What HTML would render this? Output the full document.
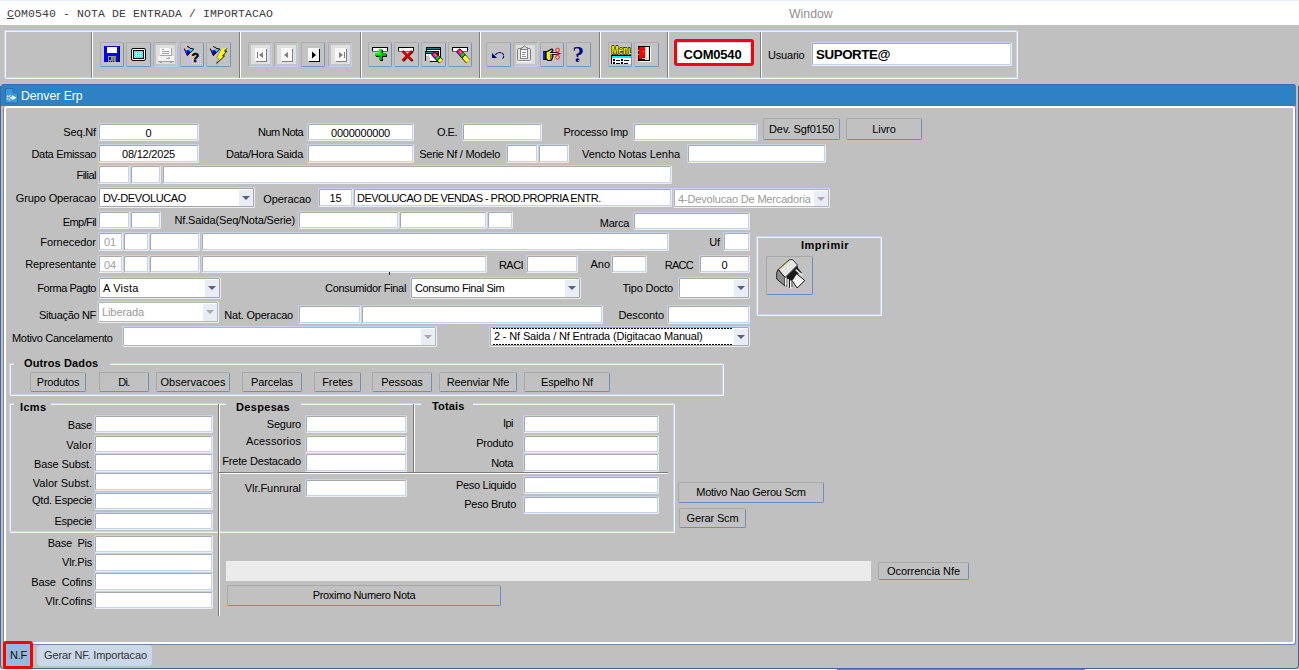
<!DOCTYPE html>
<html><head><meta charset="utf-8"><title>COM0540</title>
<style>
html,body{margin:0;padding:0}
body{width:1299px;height:670px;position:relative;overflow:hidden;background:#c0c0c0;font-family:"Liberation Sans",sans-serif;font-size:11px;color:#000}
div{box-sizing:border-box}
#menubar{position:absolute;left:0;top:0;width:1299px;height:25px;background:#fff;border-top:1px solid #e6f2fa}
#menubar .m{position:absolute;left:7px;top:6px;font-family:"Liberation Mono",monospace;font-size:11.5px;letter-spacing:0.1px;color:#3c3c3c;white-space:pre}
#menubar .m u{text-decoration:underline}
#menubar .w{position:absolute;left:789px;top:6px;font-size:12.3px;color:#909090}
#tbar{left:5px;top:31px;width:1013px;height:48px}
.tb{position:absolute;top:42px;width:24px;height:25px;border:1px solid;border-color:#adadad #7494bc #7494bc #adadad;border-radius:2px;background:#c3c3c3}
.tb.td{border-color:#adadad #bcd2ee #bcd2ee #adadad}
.tb svg{left:-1px !important;top:-1px !important}
.tsep{position:absolute;top:32px;width:2px;height:46px;border-left:1px solid #808080;border-right:1px solid #fff}
#code{position:absolute;left:674px;top:39px;width:80px;height:27px;border:3px solid #fe0000;border-radius:3px;background:#fff;box-shadow:inset 0 1px 0 #c4d4ec,inset -1px 0 0 #d4e0f0;font-weight:bold;font-size:13px;letter-spacing:-0.2px;text-align:center;line-height:24px;padding-right:3px;padding-top:1px}
#usr{position:absolute;left:768px;top:49px;font-size:11px;letter-spacing:-0.2px}
#usrf{position:absolute;left:811px;top:42px;width:201px;height:24px;font-weight:bold;font-size:13.3px;letter-spacing:-0.4px;line-height:23px;padding-left:4px}
#title{position:absolute;left:1px;top:84px;width:1295px;height:22px;background:#2d82c4;border-top:1px solid #3a6ea6;border-radius:3px 3px 0 0;color:#fff;font-size:12px}
#title span{position:absolute;left:20px;top:4px;font-size:12.2px}
#lb{position:absolute;left:0;top:86px;width:1px;height:560px;background:#46639a}
#rb{position:absolute;left:1298px;top:86px;width:1px;height:560px;background:#46639a}
#canvas{position:absolute;left:3px;top:106px;width:1293px;height:539px;border:1px solid #6f86ad;border-top:none;border-radius:4px 3px 3px 3px}
#canvas2{position:absolute;left:4px;top:106px;width:1291px;height:538px;border:2px solid #fff;border-radius:3px}
.f{position:absolute;background:#fff;border:1px solid;border-color:#c4d4ec #ededf1 #ededf1 #c4d4ec;border-radius:2px;box-shadow:inset 1px 1px 0 #a9a9a9,inset -1px -1px 0 #c4d4ec;white-space:nowrap;overflow:hidden;font-size:11px;padding:0 3px;letter-spacing:-0.2px}
.f.dis{color:#a0a0a0;padding-left:5px}
.f.s{padding-left:4px;box-shadow:inset 0 0 0 1px #a6a6a6}
.f.s i{position:absolute;right:1px;top:2px;bottom:1px;width:14px;background:#e9edf5}
.f.s i:after{content:"";position:absolute;left:3px;top:6px;border:4px solid transparent;border-top:4px solid #5c5f7c;border-bottom:none}
.f.s.d{color:#9a9a9a;box-shadow:inset 0 0 0 1px #b4b4b4}
.f.s.d i:after{border-top-color:#a8a8a8}
.f.s.foc:before{content:"";position:absolute;left:3px;right:16px;top:1px;bottom:1px;background:repeating-linear-gradient(90deg,#000 0 2px,transparent 2px 3px) 0 0/100% 1px no-repeat,repeating-linear-gradient(90deg,#000 0 2px,transparent 2px 3px) 0 100%/100% 1px no-repeat}
.l{position:absolute;white-space:nowrap;font-size:11px;line-height:16px;letter-spacing:-0.15px}
.l.r{text-align:right}
.l.bd{font-weight:bold;font-size:11px;letter-spacing:0}
.l.ft{background:#c0c0c0}
.b{position:absolute;text-align:center;white-space:nowrap;font-size:11px;border:1px solid;border-color:#a8a8a8 #6f8fb9 #6f8fb9 #a8a8a8;border-radius:2px;background:#c1c1c1;letter-spacing:0.1px}
.fr{position:absolute;border:1px solid #f1f5fa}
.fr:before{content:"";position:absolute;left:-2px;top:-2px;right:0;bottom:0;border:1px solid #c2d6ef}
.vl{position:absolute;width:2px;border-left:1px solid #7a7a7a;border-right:1px solid #fff}
.hl{position:absolute;height:2px;border-top:1px solid #7a7a7a;border-bottom:1px solid #fff}
#tabs{position:absolute;left:0;top:645px;width:1299px;height:23px}
#nf{position:absolute;left:3px;top:641px;width:30px;height:28px;border:3px solid #fe0000;border-radius:3px;background:#96b9dc;font-size:11px;text-align:center;line-height:22px;color:#111;z-index:5;letter-spacing:-0.3px;padding-left:1px}
#gi{position:absolute;left:37px;top:645px;width:115px;height:21px;background:#cbd8ea;border-radius:4px;font-size:11px;text-align:center;line-height:20px;color:#333;letter-spacing:-0.15px;padding-left:2px}
#bot{position:absolute;left:0;top:669px;width:1299px;height:1px;background:#f1f8fb}
#botl{position:absolute;left:0;top:640px;width:1299px;height:29px;border:1px solid #46639a;border-top:none;border-radius:0 0 4px 4px}
#bot i{position:absolute;left:837px;top:0;width:248px;height:1px;background:#3c96bf}
</style></head><body>
<div id="menubar"><div class="m"><u>C</u>OM0540 - NOTA DE ENTRADA / IMPORTACAO</div><div class="w">Window</div></div>
<div id="tbar" class="fr"></div>
<div class="tb" style="left:100px;width:24px"><svg width="24" height="25" viewBox="0 0 24 25" shape-rendering="crispEdges" style="position:absolute;left:0;top:0"><rect x="4" y="4" width="16" height="16" fill="#0000ff"/><rect x="19" y="5" width="1" height="15" fill="#000"/><rect x="5" y="19" width="15" height="1" fill="#000"/><rect x="7" y="5" width="10" height="6" fill="#fff"/><rect x="8" y="14" width="8" height="6" fill="#9a9a80"/><rect x="12" y="15" width="4" height="4" fill="#808080"/><rect x="9" y="15" width="2" height="3" fill="#0000ff"/><rect x="5" y="7" width="1" height="1" fill="#000"/><path d="M8 4h1M10 4h1M12 4h1M14 4h1M16 4h1M9 19h1M11 19h1M13 19h1" stroke="#000" stroke-width="1" transform="translate(0,.5)"/></svg></div>
<div class="tb" style="left:126px;width:25px"><svg width="24" height="25" viewBox="0 0 24 25" shape-rendering="crispEdges" style="position:absolute;left:0;top:0"><rect x="5.5" y="6.5" width="14" height="12" rx="1.5" fill="#fff" stroke="#000" stroke-width="1" shape-rendering="auto"/><rect x="7.5" y="8.5" width="10" height="8" fill="#b8f4f4" stroke="#000" stroke-width="1"/><path d="M8 9.5h9M8 11.5h9M8 13.5h9M8 15.5h9" stroke="#20e0e0" stroke-width="1" stroke-dasharray="1 1"/><path d="M9 10.5h8M9 12.5h8M9 14.5h8" stroke="#20e0e0" stroke-width="1" stroke-dasharray="1 1"/><path d="M10 11.5h5M10 13.5h5" stroke="#d8d8d8" stroke-width="1"/></svg></div>
<div class="tb td" style="left:153px;width:24px"><svg width="24" height="25" viewBox="0 0 24 25" shape-rendering="crispEdges" style="position:absolute;left:0;top:0"><rect x="3" y="3" width="19" height="19" fill="#dedede"/><rect x="7" y="6" width="12" height="8" fill="#a8a8a8"/><rect x="7" y="6" width="11" height="7" fill="#f8f8f8"/><path d="M9 7.500h2M9 9.500h7M9 11.500h7" stroke="#a0a0a0"/><rect x="5" y="14" width="16" height="5" fill="#f2f2f2"/><rect x="5" y="19" width="16" height="1" fill="#a0a0a0"/><rect x="13" y="16" width="4" height="1" fill="#b0b0b0"/><rect x="15" y="15" width="2" height="1" fill="#c0c0c0"/><rect x="7" y="20" width="2" height="1" fill="#a0a0a0"/><rect x="17" y="20" width="2" height="1" fill="#a0a0a0"/></svg></div>
<div class="tb" style="left:180px;width:24px"><svg width="24" height="25" viewBox="0 0 24 25" shape-rendering="crispEdges" style="position:absolute;left:0;top:0"><g shape-rendering="auto" transform="translate(0,0)"><path d="M8.4 7 L13.6 7.3 L10.4 10.4 L8.8 8.4 Z" fill="#00f0f0"/><path d="M6.2 8.2 L8.8 8 L10.6 10.2 L7.2 13.6 Z" fill="#0000e8"/><path d="M4.3 6.6 L7.3 13.4" stroke="#000" stroke-width="1.1"/><path d="M7.2 13.7 L13.9 7.1" stroke="#000" stroke-width="1"/><path d="M7 4.4 L9.8 5.7 M9.8 6.2 L13.8 7" stroke="#000" stroke-width="1"/><rect x="8" y="4" width="1" height="1" fill="#e00000"/></g><g fill="#ffff00"><rect x="10" y="11" width="1" height="1"/><rect x="12" y="11" width="1" height="1"/><rect x="10" y="13" width="1" height="1"/><rect x="20" y="13" width="1" height="1"/><rect x="10" y="15" width="1" height="1"/><rect x="12" y="15" width="1" height="1"/><rect x="14" y="15" width="1" height="1"/><rect x="18" y="15" width="1" height="1"/><rect x="20" y="15" width="1" height="1"/><rect x="10" y="17" width="1" height="1"/><rect x="12" y="17" width="1" height="1"/><rect x="18" y="17" width="1" height="1"/><rect x="20" y="17" width="1" height="1"/><rect x="12" y="19" width="1" height="1"/><rect x="18" y="19" width="1" height="1"/><rect x="20" y="19" width="1" height="1"/><rect x="12" y="21" width="1" height="1"/><rect x="14" y="21" width="1" height="1"/><rect x="16" y="21" width="1" height="1"/><rect x="18" y="21" width="1" height="1"/><rect x="20" y="21" width="1" height="1"/></g><text x="11.6" y="20.3" font-family="Liberation Sans" font-weight="bold" font-size="12.5" fill="#000" stroke="#000" stroke-width=".5" shape-rendering="auto">?</text></svg></div>
<div class="tb" style="left:206px;width:25px"><svg width="24" height="25" viewBox="0 0 24 25" shape-rendering="crispEdges" style="position:absolute;left:0;top:0"><g shape-rendering="auto" transform="translate(0,0)"><path d="M8.4 7 L13.6 7.3 L10.4 10.4 L8.8 8.4 Z" fill="#00f0f0"/><path d="M6.2 8.2 L8.8 8 L10.6 10.2 L7.2 13.6 Z" fill="#0000e8"/><path d="M4.3 6.6 L7.3 13.4" stroke="#000" stroke-width="1.1"/><path d="M7.2 13.7 L13.9 7.1" stroke="#000" stroke-width="1"/><path d="M7 4.4 L9.8 5.7 M9.8 6.2 L13.8 7" stroke="#000" stroke-width="1"/></g><g shape-rendering="auto"><path d="M15 7.2 L10.6 16 L13.4 16 L10.2 21" fill="none" stroke="#909090" stroke-width="1"/><path d="M16.2 6.5 L20.8 6.5 L18.5 9.2 L20.8 9.2 L16.6 14 L18.5 14 L10.5 21.6 L14 16.2 L11.1 16.2 Z" fill="#ffff00"/><path d="M20.8 6.5 L18.5 9.2 L20.8 9.2 L16.6 14 L18.5 14 L10.5 21.6" fill="none" stroke="#000" stroke-width=".9"/></g></svg></div>
<div class="tb td" style="left:248px;width:24px"><svg width="24" height="25" viewBox="0 0 24 25" shape-rendering="crispEdges" style="position:absolute;left:0;top:0"><rect x="3" y="3" width="19" height="19" fill="#e0e0e0"/><rect x="7" y="6" width="11" height="13" fill="#f8f8f8"/><rect x="8" y="19" width="11" height="1" fill="#808080"/><rect x="18" y="7" width="1" height="13" fill="#808080"/><rect x="9" y="10" width="1" height="6" fill="#808080"/><path d="M15 10 L11 13 L15 16 Z" fill="#808080" shape-rendering="auto"/></svg></div>
<div class="tb td" style="left:274px;width:24px"><svg width="24" height="25" viewBox="0 0 24 25" shape-rendering="crispEdges" style="position:absolute;left:0;top:0"><rect x="3" y="3" width="19" height="19" fill="#e0e0e0"/><rect x="7" y="6" width="11" height="13" fill="#f8f8f8"/><rect x="8" y="19" width="11" height="1" fill="#808080"/><rect x="18" y="7" width="1" height="13" fill="#808080"/><path d="M14 10 L10 13 L14 16 Z" fill="#808080" shape-rendering="auto"/></svg></div>
<div class="tb" style="left:301px;width:24px"><svg width="24" height="25" viewBox="0 0 24 25" shape-rendering="crispEdges" style="position:absolute;left:0;top:0"><rect x="7" y="6" width="11" height="13" fill="#f8f8f8"/><rect x="8" y="19" width="11" height="1" fill="#000"/><rect x="18" y="7" width="1" height="13" fill="#000"/><path d="M11 9.5 L15 13 L11 16.5 Z" fill="#000" shape-rendering="auto"/></svg></div>
<div class="tb td" style="left:328px;width:24px"><svg width="24" height="25" viewBox="0 0 24 25" shape-rendering="crispEdges" style="position:absolute;left:0;top:0"><rect x="3" y="3" width="19" height="19" fill="#e0e0e0"/><rect x="7" y="6" width="11" height="13" fill="#f8f8f8"/><rect x="8" y="19" width="11" height="1" fill="#808080"/><rect x="18" y="7" width="1" height="13" fill="#808080"/><path d="M11 10 L15 13 L11 16 Z" fill="#808080" shape-rendering="auto"/><rect x="16" y="10" width="1" height="6" fill="#808080"/></svg></div>
<div class="tb" style="left:368px;width:24px"><svg width="24" height="25" viewBox="0 0 24 25" shape-rendering="crispEdges" style="position:absolute;left:0;top:0"><rect x="4" y="5" width="16" height="5" fill="#fff"/><rect x="4" y="5" width="16" height="1" fill="#000"/><rect x="4" y="5" width="1" height="4" fill="#000"/><rect x="19" y="5" width="1" height="4" fill="#000"/><rect x="4" y="9" width="16" height="1" fill="#707070"/><path d="M12 8h3v4h4v3h-4v4h-3v-4h-4v-3h4z" fill="#000"/><path d="M11 7h3v4h4v3h-4v4h-3v-4h-4v-3h4z" fill="#00b800"/><path d="M11 7h2v4h-2zM7 11h6v2h-6z" fill="#00ff00"/></svg></div>
<div class="tb" style="left:394px;width:25px"><svg width="24" height="25" viewBox="0 0 24 25" shape-rendering="crispEdges" style="position:absolute;left:0;top:0"><rect x="4" y="5" width="16" height="5" fill="#fff"/><rect x="4" y="5" width="16" height="1" fill="#000"/><rect x="4" y="5" width="1" height="4" fill="#000"/><rect x="19" y="5" width="1" height="4" fill="#000"/><rect x="4" y="9" width="16" height="1" fill="#707070"/><g shape-rendering="auto"><path d="M9 9.5 L18.5 19 M18.5 9.5 L9 19" stroke="#000" stroke-width="2.4"/><path d="M8.5 8.8 L18 18.2 M18 8.8 L8.5 18.2" stroke="#e80000" stroke-width="2.3"/></g></svg></div>
<div class="tb" style="left:421px;width:25px"><svg width="24" height="25" viewBox="0 0 24 25" shape-rendering="crispEdges" style="position:absolute;left:0;top:0"><rect x="5.5" y="5.5" width="14" height="12" fill="#fff" stroke="#000"/><rect x="6" y="6" width="13" height="1" fill="#008888"/><rect x="6" y="7" width="13" height="1" fill="#000"/><rect x="4.5" y="9.5" width="13" height="10" fill="#fff" stroke="#000"/><rect x="5" y="10" width="12" height="1" fill="#00a0a0"/><rect x="5" y="11" width="12" height="1" fill="#000"/><path d="M5 19 L5 14 L8 13 L10 19 Z" fill="#c8c8c8"/><rect x="4" y="19" width="5" height="2" fill="#c0c0c0"/><g shape-rendering="auto" transform="translate(12.2,11.3) rotate(46.4)"><rect x="-.5" y="-2.7" width="12.0" height="5.4" fill="#000" rx="1"/><rect x="0" y="-2.2" width="5" height="4.2" fill="#ff00ff" rx="1.3"/><rect x="0" y="-2.2" width="5" height="1.8" fill="#f00000" rx="1"/><rect x="1.5" y="-1.1" width="2.5" height="1" fill="#ffd000"/><rect x="5" y="-2.2" width="2.7" height="4.2" fill="#00d800"/><rect x="8.5" y="-2.2" width="2.8" height="4.2" fill="#ffff00"/><rect x="8.5" y="-1.2" width="2.8" height="1" fill="#ffffb0"/></g></svg></div>
<div class="tb" style="left:448px;width:24px"><svg width="24" height="25" viewBox="0 0 24 25" shape-rendering="crispEdges" style="position:absolute;left:0;top:0"><rect x="4" y="5" width="16" height="5" fill="#fff"/><rect x="4" y="5" width="16" height="1" fill="#000"/><rect x="4" y="5" width="1" height="4" fill="#000"/><rect x="19" y="5" width="1" height="4" fill="#000"/><rect x="4" y="9" width="16" height="1" fill="#707070"/><g shape-rendering="auto" transform="translate(10.3,8.3) rotate(48.6)"><rect x="-.5" y="-2.7" width="15.4" height="5.4" fill="#000" rx="1"/><rect x="0" y="-2.2" width="5" height="4.2" fill="#ff00ff" rx="1.3"/><rect x="0" y="-2.2" width="5" height="1.8" fill="#f00000" rx="1"/><rect x="1.5" y="-1.1" width="2.5" height="1" fill="#ffd000"/><rect x="5" y="-2.2" width="2.7" height="4.2" fill="#00d800"/><rect x="8.5" y="-2.2" width="6.2" height="4.2" fill="#ffff00"/><rect x="8.5" y="-1.2" width="6.2" height="1" fill="#ffffb0"/></g></svg></div>
<div class="tb" style="left:486px;width:25px"><svg width="25" height="25" viewBox="0 0 25 25" shape-rendering="crispEdges" style="position:absolute;left:0;top:0"><g shape-rendering="auto"><path d="M9.5 13 C10.5 10.3 16.8 9 17.7 13.5 C17.9 15 17.3 16 16.5 16.8" fill="none" stroke="#000080" stroke-width="1.1" stroke-dasharray="3 .6"/><path d="M6 11 L6 16 L11 16 Z" fill="#000080"/></g></svg></div>
<div class="tb td" style="left:513px;width:25px"><svg width="25" height="25" viewBox="0 0 25 25" shape-rendering="crispEdges" style="position:absolute;left:0;top:0"><rect x="3" y="3" width="19" height="19" fill="#dedede"/><rect x="5" y="19" width="13" height="1" fill="#fff"/><g fill="none" stroke="#808080" stroke-width="1"><rect x="4.5" y="6.5" width="13" height="12" fill="#e6e6e6" shape-rendering="auto" rx="1"/><path d="M8.5 7.5 v-2 h1.5 l1 -1.5 h1 l1 1.5 h1.5 v2" fill="#dcdcdc" shape-rendering="auto"/><rect x="7.5" y="7.5" width="7" height="9" fill="#fff"/><path d="M9 10.500h4M9 12.500h3M9 14.500h4" stroke="#909090"/></g></svg></div>
<div class="tb" style="left:540px;width:24px"><svg width="24" height="25" viewBox="0 0 24 25" shape-rendering="crispEdges" style="position:absolute;left:0;top:0"><rect x="3" y="9" width="3" height="9" fill="#000"/><rect x="3" y="10" width="2" height="7" fill="#0020ff"/><g shape-rendering="auto"><path d="M6 10 L9 8.5 L12 7 L13 8.5 L11 10.5 L17 10.5 L18 11.5 L17 12.5 L12.5 12.5 L13 14 L12.5 15.5 L12 17 L11 18.5 L8 18.5 L6 17 Z" fill="#e8e020" stroke="#000" stroke-width="1.1"/><path d="M7 11.500h5M7 13.500h5M7 15.500h5M8 17.500h3" stroke="#fff8a0" stroke-width="1" stroke-dasharray="1 1"/><path d="M10 13h3M10 15h2.500M10 17h2" stroke="#000" stroke-width=".9"/><circle cx="17.6" cy="8" r="1.9" fill="none" stroke="#ff1010" stroke-width=".9"/><circle cx="17.6" cy="15.3" r="1.9" fill="none" stroke="#ff1010" stroke-width=".9"/><path d="M16.6 10 L18.8 13.3 M18.6 10 L16.4 13.3" stroke="#ff1010" stroke-width="1"/><path d="M18.5 11.600h2" stroke="#000" stroke-width="1"/></g></svg></div>
<div class="tb" style="left:566px;width:25px"><svg width="25" height="25" viewBox="0 0 25 25" shape-rendering="crispEdges" style="position:absolute;left:0;top:0"><text x="6.6" y="19.8" font-family="Liberation Serif" font-weight="bold" font-size="23" fill="#000080" shape-rendering="auto">?</text><rect x="9" y="7" width="1" height="1" fill="#fff"/><rect x="12" y="18" width="1" height="1" fill="#fff"/></svg></div>
<div class="tb" style="left:608px;width:24px"><svg width="23" height="24" viewBox="0 0 23 24" shape-rendering="crispEdges" style="position:absolute;left:0;top:0"><g shape-rendering="auto"><text x="3.6" y="11.8" font-family="Liberation Sans" font-weight="bold" font-size="10" textLength="21.5" lengthAdjust="spacingAndGlyphs" fill="#ffff00" stroke="#000" stroke-width="1.3" paint-order="stroke" stroke-linejoin="round">Menu</text></g><rect x="3" y="13" width="20" height="1" fill="#000"/><rect x="4" y="14" width="19" height="2" fill="#00f0f0"/><rect x="3" y="13" width="1" height="9" fill="#000"/><rect x="4" y="16" width="19" height="6" fill="#fff"/><rect x="4" y="15.6" width="19" height=".6" fill="#444"/><rect x="5" y="17" width="2" height="2" fill="#000"/><rect x="5" y="20" width="2" height="2" fill="#000"/><rect x="13" y="17" width="2" height="2" fill="#000"/><rect x="13" y="20" width="2" height="2" fill="#000"/><rect x="8" y="18" width="4" height="1" fill="#000"/><rect x="8" y="21" width="4" height="1" fill="#000"/><rect x="16" y="18" width="5" height="1" fill="#000"/><rect x="16" y="21" width="4" height="1" fill="#000"/></svg></div>
<div class="tb" style="left:634px;width:25px"><svg width="25" height="25" viewBox="0 0 25 25" shape-rendering="crispEdges" style="position:absolute;left:0;top:0"><rect x="5" y="5" width="12" height="15" fill="#fff"/><rect x="4" y="4" width="12" height="15" fill="#000"/><rect x="11" y="5" width="4" height="13" fill="#e0e0e0"/><rect x="13" y="6" width="1" height="11" fill="#fff"/><rect x="8" y="16" width="6" height="1" fill="#d0d0d0"/><path d="M5 5 L11 5 L11 15.5 L9 15.5 L7 17 L5 17 Z" fill="#ff0000" shape-rendering="auto"/><rect x="4" y="8" width="1" height="1" fill="#f0f000"/><rect x="4" y="12" width="1" height="1" fill="#f0f000"/><rect x="9" y="9" width="1" height="1" fill="#f0f000"/></svg></div>
<div class="tsep" style="left:91px"></div>
<div class="tsep" style="left:239px"></div>
<div class="tsep" style="left:360px"></div>
<div class="tsep" style="left:479px"></div>
<div class="tsep" style="left:599px"></div>
<div class="tsep" style="left:667px"></div>
<div class="tsep" style="left:760px"></div>
<div id="code">COM0540</div>
<div id="usr">Usuario</div>
<div id="usrf" class="f">SUPORTE@</div>
<div id="lb"></div><div id="rb"></div>
<div id="title"><svg width="14" height="16" viewBox="0 0 14 16" style="position:absolute;left:4px;top:3px"><path d="M.5 .5h7.500l4.5 4.500v10h-12.500z" fill="#3f98d8" stroke="#2a6fae"/><path d="M8 .5v4.500h4.5" stroke="#2a6fae" fill="#3285c8"/><path d="M7.3 7.300l4.2 2.4-4.2 2.400z" fill="#fff"/><circle cx="4.3" cy="9.7" r="1.9" fill="none" stroke="#fff" stroke-width="1.7" stroke-dasharray="1.1 .9"/></svg><span>Denver Erp</span></div>
<div id="canvas"></div><div id="canvas2"></div>
<div class="l r " style="left:-204px;width:300px;top:124px;letter-spacing:-0.15px;">Seq.Nf</div>
<div class="f " style="left:98px;top:123px;width:101px;height:18px;line-height:18px;text-align:center;">0</div>
<div class="l r " style="left:3px;width:300px;top:124px;letter-spacing:-0.57px;">Num Nota</div>
<div class="f " style="left:307px;top:123px;width:107px;height:18px;line-height:18px;text-align:center;letter-spacing:-0.22px;">0000000000</div>
<div class="l r " style="left:157px;width:300px;top:124px;letter-spacing:-0.50px;">O.E.</div>
<div class="f " style="left:462px;top:123px;width:80px;height:18px;line-height:18px;"></div>
<div class="l r " style="left:328px;width:300px;top:124px;letter-spacing:-0.23px;">Processo Imp</div>
<div class="f " style="left:633px;top:123px;width:125px;height:18px;line-height:18px;"></div>
<div class="b " style="left:763px;top:118px;width:77px;height:22px;line-height:20px;letter-spacing:-0.07px;">Dev. Sgf0150</div>
<div class="b " style="left:846px;top:118px;width:76px;height:22px;line-height:20px;letter-spacing:-0.09px;">Livro</div>
<div class="l r " style="left:-204px;width:300px;top:146px;letter-spacing:-0.33px;">Data Emissao</div>
<div class="f " style="left:98px;top:144px;width:101px;height:19px;line-height:19px;text-align:center;letter-spacing:-0.20px;">08/12/2025</div>
<div class="l r " style="left:3px;width:300px;top:146px;letter-spacing:-0.29px;">Data/Hora Saida</div>
<div class="f " style="left:307px;top:144px;width:107px;height:19px;line-height:19px;"></div>
<div class="l r " style="left:200px;width:300px;top:146px;letter-spacing:-0.25px;">Serie Nf / Modelo</div>
<div class="f " style="left:506px;top:144px;width:32px;height:19px;line-height:19px;"></div>
<div class="f " style="left:538px;top:144px;width:31px;height:19px;line-height:19px;"></div>
<div class="l r " style="left:380px;width:300px;top:146px;letter-spacing:-0.06px;">Vencto Notas Lenha</div>
<div class="f " style="left:687px;top:144px;width:139px;height:19px;line-height:19px;"></div>
<div class="l r " style="left:-204px;width:300px;top:167px;letter-spacing:-0.52px;">Filial</div>
<div class="f " style="left:98px;top:165px;width:32px;height:19px;line-height:19px;"></div>
<div class="f " style="left:130px;top:165px;width:31px;height:19px;line-height:19px;"></div>
<div class="f " style="left:162px;top:165px;width:510px;height:19px;line-height:19px;"></div>
<div class="l r " style="left:-204px;width:300px;top:190px;letter-spacing:-0.12px;">Grupo Operacao</div>
<div class="f s " style="left:98px;top:187px;width:157px;height:21px;line-height:21px;letter-spacing:-0.37px;">DV-DEVOLUCAO<i></i></div>
<div class="l r " style="left:11px;width:300px;top:191px;letter-spacing:-0.07px;">Operacao</div>
<div class="f " style="left:318px;top:188px;width:35px;height:19px;line-height:19px;text-align:center;">15</div>
<div class="f " style="left:353px;top:188px;width:319px;height:19px;line-height:19px;letter-spacing:-0.54px;">DEVOLUCAO DE VENDAS - PROD.PROPRIA ENTR.</div>
<div class="f s d" style="left:673px;top:188px;width:157px;height:20px;line-height:20px;letter-spacing:-0.17px;">4-Devolucao De Mercadoria<i></i></div>
<div class="l r " style="left:-204px;width:300px;top:214px;letter-spacing:-0.58px;">Emp/Fil</div>
<div class="f " style="left:98px;top:211px;width:32px;height:18px;line-height:18px;"></div>
<div class="f " style="left:130px;top:211px;width:31px;height:18px;line-height:18px;"></div>
<div class="l r " style="left:-5px;width:300px;top:212px;letter-spacing:-0.15px;">Nf.Saida(Seq/Nota/Serie)</div>
<div class="f " style="left:298px;top:211px;width:101px;height:18px;line-height:18px;"></div>
<div class="f " style="left:399px;top:211px;width:88px;height:18px;line-height:18px;"></div>
<div class="f " style="left:487px;top:211px;width:26px;height:18px;line-height:18px;"></div>
<div class="l r " style="left:329px;width:300px;top:215px;letter-spacing:-0.26px;">Marca</div>
<div class="f " style="left:633px;top:212px;width:117px;height:18px;line-height:18px;"></div>
<div class="l r " style="left:-204px;width:300px;top:234px;letter-spacing:-0.05px;">Fornecedor</div>
<div class="f dis" style="left:98px;top:232px;width:25px;height:19px;line-height:19px;">01</div>
<div class="f " style="left:123px;top:232px;width:26px;height:19px;line-height:19px;"></div>
<div class="f " style="left:149px;top:232px;width:51px;height:19px;line-height:19px;"></div>
<div class="f " style="left:201px;top:232px;width:468px;height:19px;line-height:19px;"></div>
<div class="l r " style="left:420px;width:300px;top:234px;">Uf</div>
<div class="f " style="left:723px;top:232px;width:27px;height:19px;line-height:19px;"></div>
<div class="l r " style="left:-204px;width:300px;top:256px;letter-spacing:-0.11px;">Representante</div>
<div class="f dis" style="left:98px;top:255px;width:25px;height:18px;line-height:18px;">04</div>
<div class="f " style="left:123px;top:255px;width:26px;height:18px;line-height:18px;"></div>
<div class="f " style="left:149px;top:255px;width:51px;height:18px;line-height:18px;"></div>
<div class="f " style="left:201px;top:255px;width:286px;height:18px;line-height:18px;"></div>
<div class="l r " style="left:223px;width:300px;top:257px;letter-spacing:-0.57px;">RACI</div>
<div class="f " style="left:526px;top:255px;width:52px;height:18px;line-height:18px;"></div>
<div class="l r " style="left:310px;width:300px;top:256px;letter-spacing:-0.03px;">Ano</div>
<div class="f " style="left:611px;top:255px;width:36px;height:18px;line-height:18px;"></div>
<div class="l r " style="left:393px;width:300px;top:257px;letter-spacing:-0.73px;">RACC</div>
<div class="f " style="left:699px;top:255px;width:51px;height:18px;line-height:18px;text-align:center;">0</div>
<div class="l r " style="left:-204px;width:300px;top:280px;letter-spacing:-0.44px;">Forma Pagto</div>
<div class="f s " style="left:98px;top:277px;width:123px;height:22px;line-height:20px;letter-spacing:0.21px;">A Vista<i></i></div>
<div class="l r " style="left:106px;width:300px;top:280px;letter-spacing:-0.33px;">Consumidor Final</div>
<div class="f s " style="left:410px;top:277px;width:171px;height:22px;line-height:20px;letter-spacing:-0.40px;">Consumo Final Sim<i></i></div>
<div class="l r " style="left:373px;width:300px;top:280px;letter-spacing:-0.23px;">Tipo Docto</div>
<div class="f s " style="left:678px;top:277px;width:72px;height:22px;line-height:20px;"><i></i></div>
<div class="l r " style="left:-204px;width:300px;top:307px;letter-spacing:-0.32px;">Situação NF</div>
<div class="f s d" style="left:97px;top:301px;width:122px;height:22px;line-height:20px;letter-spacing:-0.10px;">Liberada<i></i></div>
<div class="l r " style="left:-7px;width:300px;top:307px;letter-spacing:-0.22px;">Nat. Operacao</div>
<div class="f " style="left:298px;top:305px;width:63px;height:19px;line-height:19px;"></div>
<div class="f " style="left:361px;top:305px;width:242px;height:19px;line-height:19px;"></div>
<div class="l r " style="left:364px;width:300px;top:307px;letter-spacing:-0.12px;">Desconto</div>
<div class="f " style="left:667px;top:305px;width:83px;height:19px;line-height:19px;"></div>
<div class="l " style="left:12px;top:330px;letter-spacing:-0.31px;">Motivo Cancelamento</div>
<div class="f s d" style="left:122px;top:326px;width:315px;height:21px;line-height:19px;"><i></i></div>
<div class="f s foc" style="left:489px;top:326px;width:261px;height:21px;line-height:19px;letter-spacing:-0.15px;">2 - Nf Saida / Nf Entrada (Digitacao Manual)<i></i></div>
<div style="position:absolute;left:389px;top:272px;width:1px;height:3px;background:#222"></div>
<div class="fr" style="left:757px;top:237px;width:125px;height:79px"></div>
<div class="l bd" style="left:801px;top:237px;letter-spacing:0.50px;">Imprimir</div>
<div class="b" style="left:766px;top:256px;width:47px;height:39px"><svg width="47" height="39" viewBox="0 0 47 39" style="position:absolute;left:0px;top:0px"><path d="M18.5 20.5 L30.5 8.5 L31 11 L35 16 L29.5 17 L25 23.5 L25.5 29.5 L23 31 L18.5 29 Z" fill="#1a1a1a"/><path d="M11.2 12.5 L22 3 L25.5 2.6 L30.5 8 L18 20.5 Z" fill="#ececec" stroke="#000" stroke-width=".8"/><path d="M13 13.5 L23.5 4.5 M15 15.5 L25.5 5.5 M17 17.5 L27.5 7" stroke="#bdbdbd" stroke-width="1" stroke-dasharray="1 1"/><path d="M12 12.3 L22 3.7" stroke="#a09000" stroke-width="1"/><path d="M9.7 15.5 L11.2 12.5 L18 20.5 L18 29 L9.7 22 Z" fill="#8c8c8c" stroke="#000" stroke-width=".8"/><path d="M18 21 L19.6 20 L19.6 28.5 L18 29 Z" fill="#fff"/><path d="M28.7 12.7 L35.4 18.3" stroke="#e8e8e8" stroke-width="1.6"/><path d="M29.5 16.8 L37.7 23.5 L30.2 31 L25 23.5 Z" fill="#fff" stroke="#000" stroke-width=".9"/><path d="M28 21.5 L33 25.5 M27 24 L31.5 27.7 M29.5 19.5 L35 24" stroke="#c4c4c4" stroke-width="1" stroke-dasharray="1.5 1"/><rect x="20.3" y="22" width="1.5" height="8.5" fill="#fff"/><rect x="23" y="23.5" width="1.5" height="8" fill="#fff"/></svg></div>
<div class="fr" style="left:10px;top:364px;width:714px;height:32px"></div>
<div class="l bd ft" style="left:14px;top:355px;padding:0 12px 0 10px;letter-spacing:0.13px;">Outros Dados</div>
<div class="b " style="left:30px;top:372px;width:56px;height:20px;line-height:18px;letter-spacing:-0.19px;">Produtos</div>
<div class="b " style="left:99px;top:372px;width:50px;height:20px;line-height:18px;letter-spacing:-0.57px;">Di.</div>
<div class="b " style="left:156px;top:372px;width:74px;height:20px;line-height:18px;letter-spacing:0.02px;">Observacoes</div>
<div class="b " style="left:242px;top:372px;width:60px;height:20px;line-height:18px;letter-spacing:-0.13px;">Parcelas</div>
<div class="b " style="left:314px;top:372px;width:47px;height:20px;line-height:18px;letter-spacing:-0.11px;">Fretes</div>
<div class="b " style="left:372px;top:372px;width:60px;height:20px;line-height:18px;letter-spacing:-0.10px;">Pessoas</div>
<div class="b " style="left:439px;top:372px;width:78px;height:20px;line-height:18px;letter-spacing:-0.14px;">Reenviar Nfe</div>
<div class="b " style="left:524px;top:372px;width:86px;height:20px;line-height:18px;letter-spacing:-0.18px;">Espelho Nf</div>
<div class="fr" style="left:10px;top:404px;width:665px;height:129px"></div>
<div class="l bd ft" style="left:14px;top:399px;padding:0 5px 0 6px;letter-spacing:0.33px;">Icms</div>
<div class="l bd ft" style="left:226px;top:399px;padding:0 11px 0 10px;letter-spacing:0.33px;">Despesas</div>
<div class="l bd ft" style="left:421px;top:398px;padding:0 9px 0 11px;letter-spacing:0.15px;">Totais</div>
<div class="vl" style="left:218px;top:404px;height:212px"></div>
<div class="vl" style="left:413px;top:404px;height:68px"></div>
<div class="hl" style="left:219px;top:472px;width:449px"></div>
<div class="l r " style="left:-208px;width:300px;top:417px;letter-spacing:-0.21px;">Base</div>
<div class="f " style="left:94px;top:415px;width:119px;height:18px;line-height:18px;"></div>
<div class="l r " style="left:-208px;width:300px;top:437px;letter-spacing:0.17px;">Valor</div>
<div class="f " style="left:94px;top:435px;width:119px;height:18px;line-height:18px;"></div>
<div class="l r " style="left:-208px;width:300px;top:456px;letter-spacing:-0.12px;">Base Subst.</div>
<div class="f " style="left:94px;top:453px;width:119px;height:19px;line-height:19px;"></div>
<div class="l r " style="left:-208px;width:300px;top:475px;letter-spacing:0.01px;">Valor Subst.</div>
<div class="f " style="left:94px;top:472px;width:119px;height:19px;line-height:19px;"></div>
<div class="l r " style="left:-208px;width:300px;top:492px;letter-spacing:-0.25px;">Qtd. Especie</div>
<div class="f " style="left:94px;top:492px;width:119px;height:18px;line-height:18px;"></div>
<div class="l r " style="left:-208px;width:300px;top:513px;letter-spacing:-0.23px;">Especie</div>
<div class="f " style="left:94px;top:512px;width:119px;height:18px;line-height:18px;"></div>
<div class="l r " style="left:-208px;width:300px;top:535px;letter-spacing:-0.25px;">Base&nbsp; Pis</div>
<div class="f " style="left:94px;top:535px;width:119px;height:18px;line-height:18px;"></div>
<div class="l r " style="left:-208px;width:300px;top:554px;letter-spacing:-0.17px;">Vlr.Pis</div>
<div class="f " style="left:94px;top:553px;width:119px;height:19px;line-height:19px;"></div>
<div class="l r " style="left:-208px;width:300px;top:574px;letter-spacing:-0.14px;">Base&nbsp; Cofins</div>
<div class="f " style="left:94px;top:572px;width:119px;height:19px;line-height:19px;"></div>
<div class="l r " style="left:-208px;width:300px;top:593px;letter-spacing:-0.03px;">Vlr.Cofins</div>
<div class="f " style="left:94px;top:591px;width:119px;height:18px;line-height:18px;"></div>
<div class="l r " style="left:1px;width:300px;top:416px;letter-spacing:-0.21px;">Seguro</div>
<div class="f " style="left:305px;top:415px;width:102px;height:18px;line-height:18px;"></div>
<div class="l r " style="left:1px;width:300px;top:433px;letter-spacing:0.12px;">Acessorios</div>
<div class="f " style="left:305px;top:435px;width:102px;height:18px;line-height:18px;"></div>
<div class="l r " style="left:1px;width:300px;top:453px;letter-spacing:-0.17px;">Frete Destacado</div>
<div class="f " style="left:305px;top:453px;width:102px;height:19px;line-height:19px;"></div>
<div class="l r " style="left:1px;width:300px;top:480px;letter-spacing:-0.05px;">Vlr.Funrural</div>
<div class="f " style="left:305px;top:479px;width:102px;height:18px;line-height:18px;"></div>
<div class="l r " style="left:213px;width:300px;top:415px;letter-spacing:-0.54px;">Ipi</div>
<div class="f " style="left:523px;top:415px;width:136px;height:18px;line-height:18px;"></div>
<div class="l r " style="left:213px;width:300px;top:435px;letter-spacing:-0.25px;">Produto</div>
<div class="f " style="left:523px;top:435px;width:136px;height:18px;line-height:18px;"></div>
<div class="l r " style="left:213px;width:300px;top:455px;letter-spacing:-0.38px;">Nota</div>
<div class="f " style="left:523px;top:453px;width:136px;height:19px;line-height:19px;"></div>
<div class="l r " style="left:216px;width:300px;top:477px;letter-spacing:-0.30px;">Peso Liquido</div>
<div class="f " style="left:523px;top:476px;width:136px;height:18px;line-height:18px;"></div>
<div class="l r " style="left:216px;width:300px;top:496px;letter-spacing:-0.27px;">Peso Bruto</div>
<div class="f " style="left:523px;top:496px;width:136px;height:18px;line-height:18px;"></div>
<div class="b " style="left:678px;top:482px;width:146px;height:21px;line-height:19px;letter-spacing:-0.24px;">Motivo Nao Gerou Scm</div>
<div class="b " style="left:679px;top:508px;width:67px;height:20px;line-height:18px;letter-spacing:-0.13px;">Gerar Scm</div>
<div style="position:absolute;left:226px;top:561px;width:645px;height:20px;background:#ebebeb"></div>
<div class="b " style="left:878px;top:562px;width:91px;height:18px;line-height:16px;letter-spacing:-0.07px;">Ocorrencia Nfe</div>
<div class="b " style="left:227px;top:585px;width:274px;height:21px;line-height:19px;letter-spacing:-0.33px;">Proximo Numero Nota</div>
<div id="nf">N.F</div>
<div id="gi">Gerar NF. Importacao</div>
<div id="botl"></div><div id="bot"><i></i></div>
</body></html>
